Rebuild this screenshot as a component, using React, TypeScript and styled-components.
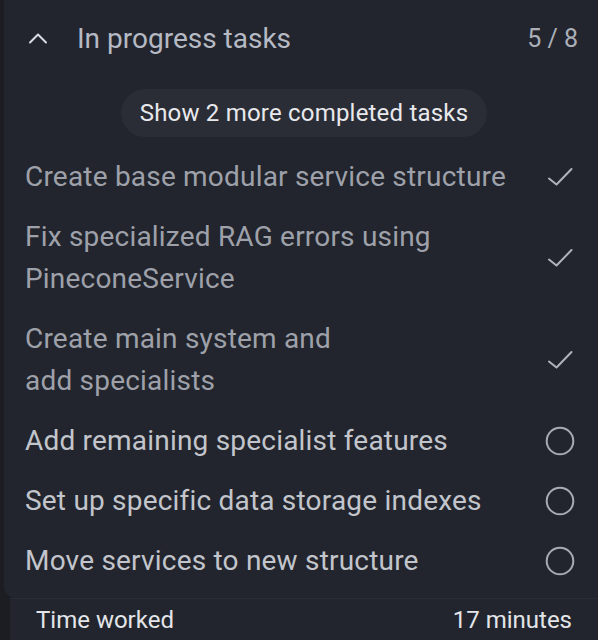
import React from "react";
import styled, { createGlobalStyle } from "styled-components";

const Global = createGlobalStyle`
  html, body { margin: 0; padding: 0; background: #1b1d23; }
  body { font-family: Roboto, "Noto Sans", sans-serif; -webkit-font-smoothing: antialiased; }
  #root { width: 598px; height: 640px; overflow: hidden; }
`;

const Page = styled.div`
  display: flex;
  flex-direction: column;
  width: 598px;
  height: 640px;
  overflow: hidden;
`;

const Card = styled.section`
  margin-left: 4px;
  margin-top: -12px;
  padding-top: 12px;
  width: 620px;
  background: #22252d;
  border-radius: 12px 0 0 12px;
  box-sizing: border-box;
  display: flex;
  flex-direction: column;
  padding-bottom: 7px;
`;

const Header = styled.div`
  display: flex;
  align-items: center;
  height: 58px;
  padding: 18px 0 0 24px;
  width: 574px;
  box-sizing: border-box;
`;

const ChevronBox = styled.div`
  width: 20px;
  height: 20px;
  display: flex;
  align-items: center;
  justify-content: center;
  margin-right: 29px;
`;

const Title = styled.div`
  flex: 1;
  font-size: 28px;
  color: #b6bac4;
`;

const Count = styled.div`
  font-size: 25px;
  color: #abafb8;
`;

const PillRow = styled.div`
  display: flex;
  justify-content: center;
  width: 608px;
  margin-top: 31px;
  margin-left: -4px;
  margin-bottom: 10px;
`;

const Pill = styled.button`
  border: none;
  height: 48px;
  padding: 0 19px;
  border-radius: 24px;
  background: #2b2d36;
  color: #e8e9ec;
  font-family: Roboto, "Noto Sans", sans-serif;
  font-size: 24px;
  letter-spacing: 0.2px;
  cursor: pointer;
`;

const List = styled.ul`
  list-style: none;
  margin: 0;
  padding: 0;
  width: 594px;
`;

const Row = styled.li`
  display: flex;
  align-items: center;
  padding: 9px 20px 9px 21px;
  box-sizing: border-box;
`;

const TaskText = styled.span<{ $done: boolean }>`
  flex: 1;
  font-size: 28px;
  letter-spacing: 0.2px;
  line-height: 42px;
  color: ${(p) => (p.$done ? "#9ea1aa" : "#c2c5cc")};
  max-width: 500px;
`;

const IconBox = styled.div`
  width: 36px;
  height: 36px;
  display: flex;
  align-items: center;
  justify-content: center;
  margin-left: auto;
`;

const Footer = styled.div`
  margin-left: 10px;
  flex: 1;
  background: #22252d;
  border-top: 1px solid #2a2d35;
  display: flex;
  align-items: center;
  justify-content: space-between;
  padding: 0 26px 0 26px;
  box-sizing: border-box;
  font-size: 24px;
  color: #e3e5e9;
`;

const Check = () => (
  <svg width="28" height="22" viewBox="0 0 28 22" fill="none">
    <path d="M3 12.5 L10.5 18.5 L25.5 3" stroke="#b0b3ba" strokeWidth="2" strokeLinecap="round" strokeLinejoin="round" />
  </svg>
);

const Circle = () => (
  <svg width="32" height="32" viewBox="0 0 32 32" fill="none">
    <circle cx="16" cy="16" r="13.3" stroke="#a8abb2" strokeWidth="2" />
  </svg>
);

const ChevronUp = () => (
  <svg width="20" height="12" viewBox="0 0 20 12" fill="none">
    <path d="M2 10.5 L10 2.5 L18 10.5" stroke="#d8dbe1" strokeWidth="2" strokeLinecap="round" strokeLinejoin="round" />
  </svg>
);

const tasks = [
  { text: "Create base modular service structure", done: true },
  { text: "Fix specialized RAG errors using\nPineconeService", done: true },
  { text: "Create main system and\nadd specialists", done: true },
  { text: "Add remaining specialist features", done: false },
  { text: "Set up specific data storage indexes", done: false },
  { text: "Move services to new structure", done: false },
];

export default function App() {
  return (
    <>
      <Global />
      <Page>
        <Card>
          <Header>
            <ChevronBox>
              <ChevronUp />
            </ChevronBox>
            <Title>In progress tasks</Title>
            <Count>5 / 8</Count>
          </Header>
          <PillRow>
            <Pill>Show 2 more completed tasks</Pill>
          </PillRow>
          <List>
            {tasks.map((t) => (
              <Row key={t.text}>
                <TaskText $done={t.done}>
                  {t.text.split("\n").map((line, i) => (
                    <React.Fragment key={i}>
                      {i > 0 && <br />}
                      {line}
                    </React.Fragment>
                  ))}
                </TaskText>
                <IconBox>{t.done ? <Check /> : <Circle />}</IconBox>
              </Row>
            ))}
          </List>
        </Card>
        <Footer>
          <span>Time worked</span>
          <span>17 minutes</span>
        </Footer>
      </Page>
    </>
  );
}
